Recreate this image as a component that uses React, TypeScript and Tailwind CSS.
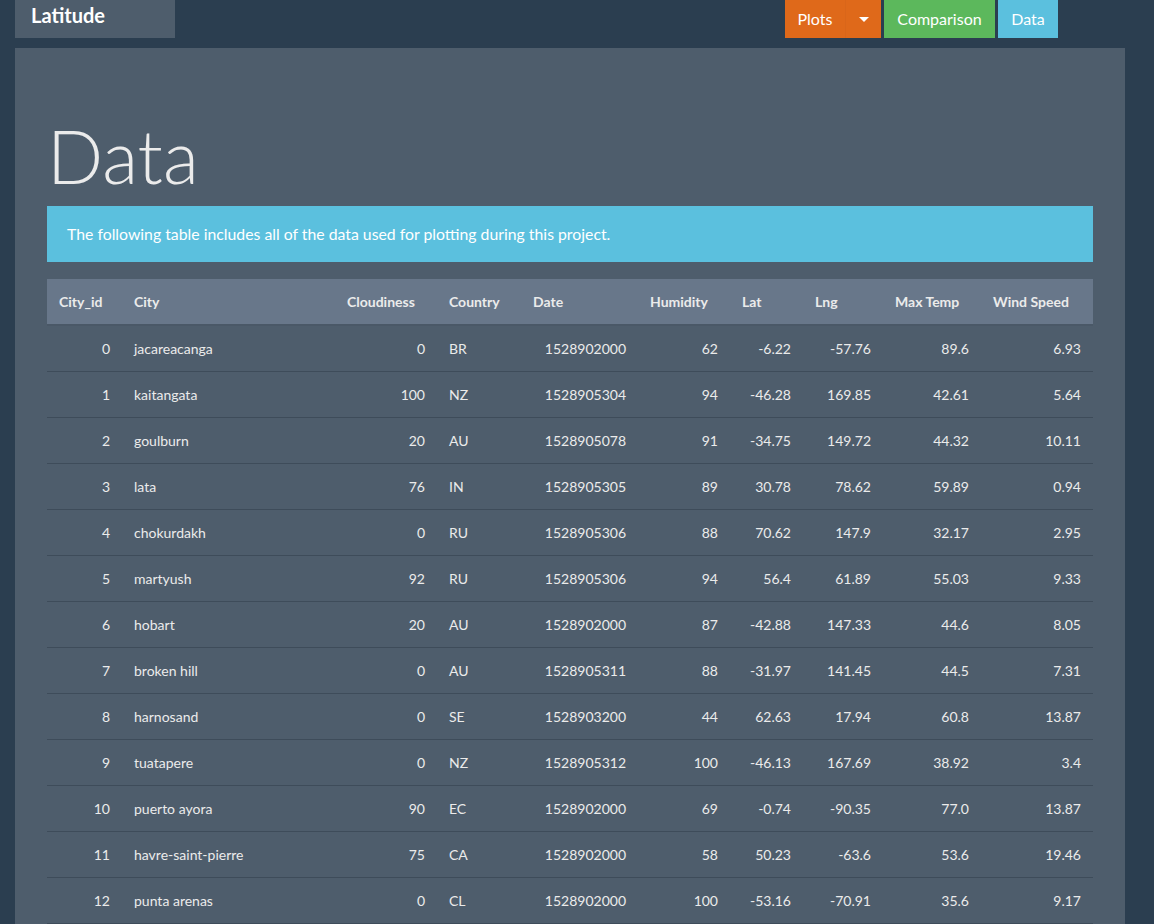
const rows = [
  [0, "jacareacanga", 0, "BR", 1528902000, 62, "-6.22", "-57.76", "89.6", "6.93"],
  [1, "kaitangata", 100, "NZ", 1528905304, 94, "-46.28", "169.85", "42.61", "5.64"],
  [2, "goulburn", 20, "AU", 1528905078, 91, "-34.75", "149.72", "44.32", "10.11"],
  [3, "lata", 76, "IN", 1528905305, 89, "30.78", "78.62", "59.89", "0.94"],
  [4, "chokurdakh", 0, "RU", 1528905306, 88, "70.62", "147.9", "32.17", "2.95"],
  [5, "martyush", 92, "RU", 1528905306, 94, "56.4", "61.89", "55.03", "9.33"],
  [6, "hobart", 20, "AU", 1528902000, 87, "-42.88", "147.33", "44.6", "8.05"],
  [7, "broken hill", 0, "AU", 1528905311, 88, "-31.97", "141.45", "44.5", "7.31"],
  [8, "harnosand", 0, "SE", 1528903200, 44, "62.63", "17.94", "60.8", "13.87"],
  [9, "tuatapere", 0, "NZ", 1528905312, 100, "-46.13", "167.69", "38.92", "3.4"],
  [10, "puerto ayora", 90, "EC", 1528902000, 69, "-0.74", "-90.35", "77.0", "13.87"],
  [11, "havre-saint-pierre", 75, "CA", 1528902000, 58, "50.23", "-63.6", "53.6", "19.46"],
  [12, "punta arenas", 0, "CL", 1528902000, 100, "-53.16", "-70.91", "35.6", "9.17"],
];

const cols = [
  { name: "City_id", w: "w-[75px]", right: true },
  { name: "City", w: "w-[213px]", right: false },
  { name: "Cloudiness", w: "w-[102px]", right: true },
  { name: "Country", w: "w-[84px]", right: false },
  { name: "Date", w: "w-[117px]", right: true },
  { name: "Humidity", w: "w-[92px]", right: true },
  { name: "Lat", w: "w-[73px]", right: true },
  { name: "Lng", w: "w-[80px]", right: true },
  { name: "Max Temp", w: "w-[98px]", right: true },
  { name: "Wind Speed", w: "w-[112px]", right: true },
];

export default function App() {
  return (
    <div
      className="min-h-[924px] bg-[#2b3e50] text-[#ebebeb]"
      style={{ fontFamily: "Lato, 'Noto Sans', sans-serif" }}
    >
      <nav className="flex h-[38px] items-start">
        <div className="ml-[15px] h-[38px] w-[160px] bg-[#4e5d6c] pl-[16px] pt-[2px] text-[20px] font-bold leading-[26px] text-white">
          Latitude
        </div>
        <div className="ml-[610px] flex h-[38px] gap-[3px] text-[16px] text-white">
          <div className="flex h-full bg-[#df691a]">
            <span className="flex w-[60px] items-center justify-center">Plots</span>
            <span className="flex w-[36px] items-center justify-center border-l border-[#d9661a]">
              <span className="h-0 w-0 border-x-[5px] border-t-[5px] border-x-transparent border-t-white" />
            </span>
          </div>
          <span className="flex w-[111px] items-center justify-center bg-[#5cb85c]">Comparison</span>
          <span className="flex w-[60px] items-center justify-center bg-[#5bc0de]">Data</span>
        </div>
      </nav>

      <main className="ml-[15px] mt-[10px] min-h-[876px] w-[1110px] bg-[#4e5d6c] px-[32px] pt-[67px] pb-8">
        <h1 className="mb-[10px] text-[74px] font-light leading-[1.1] text-[#ebebeb]">Data</h1>

        <div className="bg-[#5bc0de] px-[20px] py-[17px] text-[15.8px] leading-[22px] text-white">
          The following table includes all of the data used for plotting during this project.
        </div>

        <table className="mt-[17px] w-[1046px] table-fixed border-collapse text-[14px]">
          <thead>
            <tr className="bg-[#68778a]">
              {cols.map((c) => (
                <th
                  key={c.name}
                  className={`${c.w} h-[46px] border-b-2 border-[#4a5867] px-[12px] text-left font-bold text-[#ebebeb]`}
                >
                  {c.name}
                </th>
              ))}
            </tr>
          </thead>
          <tbody>
            {rows.map((r) => (
              <tr key={r[0] as number} className="border-b border-[#3e4c5a]">
                {r.map((v, i) => (
                  <td
                    key={i}
                    className={`h-[46px] px-[12px] ${cols[i].right ? "text-right" : "text-left"}`}
                  >
                    {v}
                  </td>
                ))}
              </tr>
            ))}
          </tbody>
        </table>
      </main>
    </div>
  );
}
